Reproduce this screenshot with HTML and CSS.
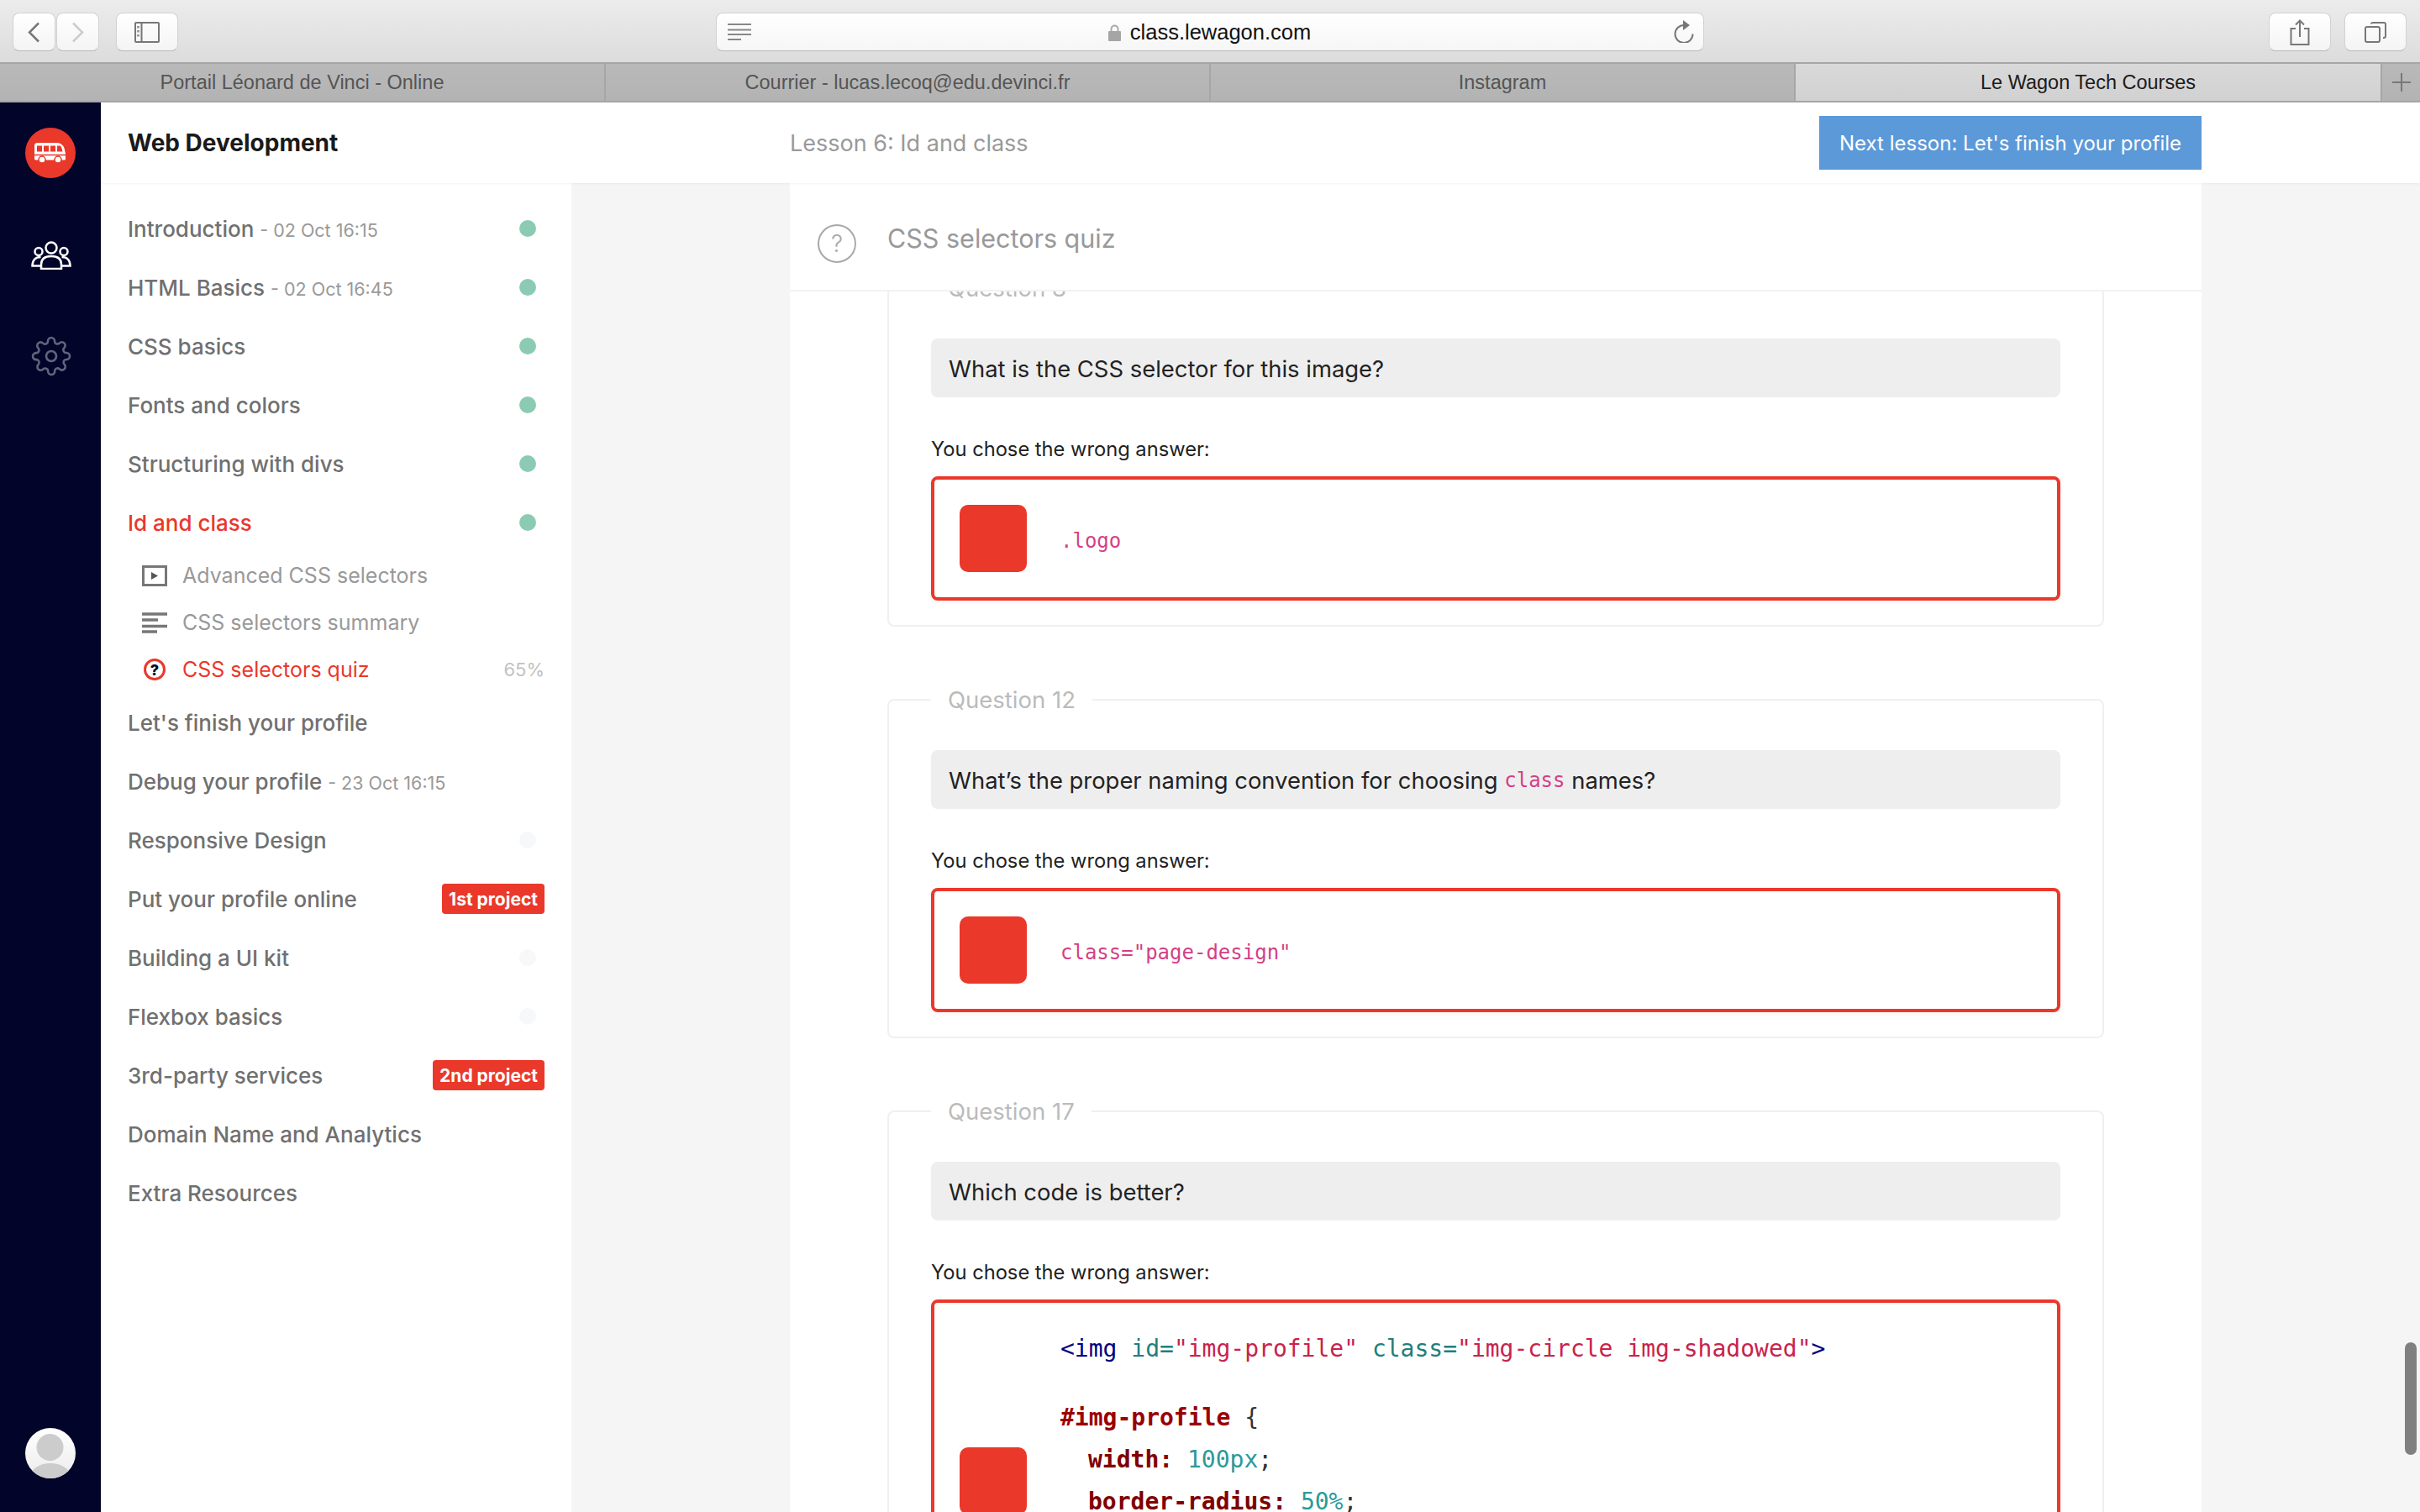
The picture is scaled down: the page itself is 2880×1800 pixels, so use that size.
FILE: index.html
```html
<!DOCTYPE html>
<html lang="en">
<head>
    <meta charset="UTF-8">
    <title>Le Wagon Tech Courses</title>
    <link rel="stylesheet" href="styles.css">
</head>
<body>

    <!-- Browser toolbar -->
    <div class="toolbar">
        <div class="tool-group">
            <div class="nav-buttons">
                <div class="tool-button nav-button">
                    <svg width="17" height="25" viewBox="0 0 17 25"><path d="M14 1.500 3 12.500l11 11" fill="none" stroke="#777" stroke-width="2.500"/></svg>
                </div>
                <div class="tool-button nav-button">
                    <svg width="17" height="25" viewBox="0 0 17 25"><path d="M3 1.500l11 11-11 11" fill="none" stroke="#ccc" stroke-width="2.500"/></svg>
                </div>
            </div>
            <div class="tool-button wide-button">
                <svg width="30" height="25" viewBox="0 0 30 25"><rect x="1" y="1" width="28" height="23" rx="1" fill="none" stroke="#777" stroke-width="2"/><path d="M8.500 1v23" stroke="#777" stroke-width="2"/><path d="M3 5h3v2.500H3zM3 10h3v2.500H3zM3 15h3v2.500H3z" fill="#999"/></svg>
            </div>
        </div>
        <div class="url-bar">
            <svg class="reader-icon" width="28" height="20" viewBox="0 0 28 20"><path d="M0 1h28M0 7.500h28M0 13h28M0 19h16" stroke="#888" stroke-width="2"/></svg>
            <div class="url-text">
                <svg width="15" height="20" viewBox="0 0 15 20"><path d="M3.500 9V5.500a4 4 0 0 1 8 0V9" fill="none" stroke="#aaa" stroke-width="2"/><rect y="8" width="15" height="12" rx="1" fill="#a5a5a5"/></svg>
                <span>class.lewagon.com</span>
            </div>
            <svg class="reload-icon" width="24" height="27" viewBox="0 0 24 27"><path d="M12 6A10.500 10.500 0 1 0 22.500 16.500" fill="none" stroke="#777" stroke-width="2"/><path d="M11 0l8 6-8 6z" fill="#777"/></svg>
        </div>
        <div class="tool-group tool-group-right">
            <div class="tool-button wide-button">
                <svg width="24" height="31" viewBox="0 0 24 31"><path d="M7 11H1.500v19h21V11H17M12 21V2M7 6.500 12 1.500l5 5" fill="none" stroke="#777" stroke-width="2"/></svg>
            </div>
            <div class="tool-button wide-button">
                <svg width="26" height="25" viewBox="0 0 26 25"><rect x="1" y="6" width="17" height="18" rx="2" fill="none" stroke="#777" stroke-width="2"/><path d="M8 2.500Q8 1 10 1h13q2 0 2 2v14q0 2-2 2h-1" fill="none" stroke="#777" stroke-width="2"/></svg>
            </div>
        </div>
    </div>

    <!-- Browser tabs -->
    <div class="tabs">
        <div class="tab tab-1">Portail Léonard de Vinci - Online</div>
        <div class="tab tab-2">Courrier - lucas.lecoq@edu.devinci.fr</div>
        <div class="tab tab-3">Instagram</div>
        <div class="tab tab-active">Le Wagon Tech Courses</div>
        <div class="tab tab-plus">
            <svg width="22" height="22" viewBox="0 0 22 22"><path d="M11 0v22M0 11h22" stroke="#777" stroke-width="2"/></svg>
        </div>
    </div>

    <div class="app">

        <!-- Dark icon rail -->
        <div class="rail">
            <div class="logo">
                <svg width="38" height="25" viewBox="0 0 38 25">
                    <path d="M4 0h23q6 0 8.500 6.500L37 13v6q0 1.500-1.500 1.500H1.500Q0 20.500 0 19V3q0-3 4-3z" fill="#fff"/>
                    <path d="M3 3.500h6v7H3zM11 3.500h6v7h-6zM19 3.500h6v7h-6zM27 3.500h3.500q1.500 0 3 7H27z" fill="#ea382b"/>
                    <path d="M0 14.500h37" stroke="#ea382b" stroke-width="1.500"/>
                    <circle cx="9" cy="20" r="4" fill="#fff" stroke="#ea382b" stroke-width="1.500"/>
                    <circle cx="28" cy="20" r="4" fill="#fff" stroke="#ea382b" stroke-width="1.500"/>
                </svg>
            </div>
            <svg class="rail-people" width="48" height="34" viewBox="0 0 48 34" fill="none" stroke="#fff" stroke-width="2.500">
                <circle cx="24" cy="8" r="6.500"/>
                <circle cx="9" cy="12.500" r="4.500"/>
                <circle cx="39" cy="12.500" r="4.500"/>
                <path d="M12 33v-5c0-7 5-10 12-10s12 3 12 10v5z"/>
                <path d="M11.500 19C5 19 1.500 23 1.500 29.500H12M36.500 19c6.500 0 10 4 10 10.500H36"/>
            </svg>
            <svg class="rail-gear" width="48" height="48" viewBox="0 0 24 24" fill="none" stroke="#63647c" stroke-width="1.300">
                <circle cx="12" cy="12" r="3"/>
                <path d="M19.400 15a1.650 1.650 0 0 0 .33 1.820l.06.06a2 2 0 0 1 0 2.830 2 2 0 0 1-2.830 0l-.06-.06a1.650 1.650 0 0 0-1.820-.33 1.650 1.650 0 0 0-1 1.510V21a2 2 0 0 1-2 2 2 2 0 0 1-2-2v-.09A1.650 1.650 0 0 0 9 19.400a1.650 1.650 0 0 0-1.820.33l-.06.06a2 2 0 0 1-2.830 0 2 2 0 0 1 0-2.830l.06-.06a1.650 1.650 0 0 0 .33-1.820 1.650 1.650 0 0 0-1.510-1H3a2 2 0 0 1-2-2 2 2 0 0 1 2-2h.09A1.650 1.650 0 0 0 4.600 9a1.650 1.650 0 0 0-.33-1.820l-.06-.06a2 2 0 0 1 0-2.830 2 2 0 0 1 2.830 0l.06.06a1.650 1.650 0 0 0 1.820.33H9a1.650 1.650 0 0 0 1-1.510V3a2 2 0 0 1 2-2 2 2 0 0 1 2 2v.09a1.650 1.650 0 0 0 1 1.510 1.650 1.650 0 0 0 1.820-.33l.06-.06a2 2 0 0 1 2.830 0 2 2 0 0 1 0 2.830l-.06.06a1.650 1.650 0 0 0-.33 1.820V9a1.650 1.650 0 0 0 1.510 1H21a2 2 0 0 1 2 2 2 2 0 0 1-2 2h-.09a1.650 1.650 0 0 0-1.510 1z"/>
            </svg>
            <div class="avatar">
                <svg width="60" height="60" viewBox="0 0 60 60"><circle cx="29.500" cy="23" r="16" fill="#ccc"/><ellipse cx="30" cy="60" rx="25" ry="18" fill="#ccc"/></svg>
            </div>
        </div>

        <div class="main">

            <!-- Page header -->
            <div class="topbar">
                <div class="course-title">Web Development</div>
                <div class="lesson-title">Lesson 6: Id and class</div>
                <div class="next-button">Next lesson: Let's finish your profile</div>
            </div>

            <div class="page">

                <!-- Lesson list -->
                <div class="sidebar">
                    <div class="lesson-row"><span class="lesson-name">Introduction <small>- 02 Oct 16:15</small></span><span class="dot dot-done"></span></div>
                    <div class="lesson-row"><span class="lesson-name">HTML Basics <small>- 02 Oct 16:45</small></span><span class="dot dot-done"></span></div>
                    <div class="lesson-row"><span class="lesson-name">CSS basics</span><span class="dot dot-done"></span></div>
                    <div class="lesson-row"><span class="lesson-name">Fonts and colors</span><span class="dot dot-done"></span></div>
                    <div class="lesson-row"><span class="lesson-name">Structuring with divs</span><span class="dot dot-done"></span></div>
                    <div class="lesson-row lesson-current"><span class="lesson-name">Id and class</span><span class="dot dot-done"></span></div>

                    <div class="sub-row">
                        <svg class="sub-icon" width="30" height="25" viewBox="0 0 30 25"><rect x="1.500" y="1.500" width="27" height="22" fill="none" stroke="#777" stroke-width="3"/><path d="M11 8l8 4.500-8 4.500z" fill="#555"/></svg>
                        <span>Advanced CSS selectors</span>
                    </div>
                    <div class="sub-row">
                        <svg class="sub-icon" width="30" height="25" viewBox="0 0 30 25"><path d="M0 2h30M0 9h19M0 16.500h30M0 23h18" stroke="#777" stroke-width="3.500"/></svg>
                        <span>CSS selectors summary</span>
                    </div>
                    <div class="sub-row sub-current">
                        <span class="sub-icon quiz-mark">?</span>
                        <span>CSS selectors quiz</span>
                        <span class="percent">65%</span>
                    </div>

                    <div class="lesson-row"><span class="lesson-name">Let's finish your profile</span></div>
                    <div class="lesson-row"><span class="lesson-name">Debug your profile <small>- 23 Oct 16:15</small></span></div>
                    <div class="lesson-row"><span class="lesson-name">Responsive Design</span><span class="dot"></span></div>
                    <div class="lesson-row"><span class="lesson-name">Put your profile online</span><span class="badge">1st project</span></div>
                    <div class="lesson-row"><span class="lesson-name">Building a UI kit</span><span class="dot"></span></div>
                    <div class="lesson-row"><span class="lesson-name">Flexbox basics</span><span class="dot"></span></div>
                    <div class="lesson-row"><span class="lesson-name">3rd-party services</span><span class="badge">2nd project</span></div>
                    <div class="lesson-row"><span class="lesson-name">Domain Name and Analytics</span></div>
                    <div class="lesson-row"><span class="lesson-name">Extra Resources</span></div>
                </div>

                <!-- Quiz column -->
                <div class="content">
                    <div class="quiz-head">
                        <span class="quiz-icon">?</span>
                        <span class="quiz-title">CSS selectors quiz</span>
                    </div>
                    <div class="quiz-scroll">

                        <fieldset class="question question-first">
                            <legend>Question 8</legend>
                            <div class="prompt">What is the CSS selector for this image?</div>
                            <div class="answer-label">You chose the wrong answer:</div>
                            <div class="answer">
                                <div class="answer-mark"></div>
                                <code class="inline-code">.logo</code>
                            </div>
                        </fieldset>

                        <fieldset class="question">
                            <legend>Question 12</legend>
                            <div class="prompt">What’s the proper naming convention for choosing <code class="inline-code">class</code> names?</div>
                            <div class="answer-label">You chose the wrong answer:</div>
                            <div class="answer">
                                <div class="answer-mark"></div>
                                <code class="inline-code">class="page-design"</code>
                            </div>
                        </fieldset>

                        <fieldset class="question">
                            <legend>Question 17</legend>
                            <div class="prompt">Which code is better?</div>
                            <div class="answer-label">You chose the wrong answer:</div>
                            <div class="answer answer-tall">
                                <div class="answer-mark"></div>
                                <div class="code-blocks">
                                    <div class="code">
                                        <div class="code-line"><span class="tag">&lt;img</span> <span class="attr">id=</span><span class="str">"img-profile"</span> <span class="attr">class=</span><span class="str">"img-circle img-shadowed"</span><span class="tag">&gt;</span></div>
                                    </div>
                                    <div class="code">
                                        <div class="code-line"><span class="sel">#img-profile</span> {</div>
                                        <div class="code-line indent"><span class="prop">width:</span> <span class="val">100px</span>;</div>
                                        <div class="code-line indent"><span class="prop">border-radius:</span> <span class="val">50%</span>;</div>
                                        <div class="code-line">}</div>
                                    </div>
                                </div>
                            </div>
                        </fieldset>

                    </div>
                </div>
            </div>
        </div>
    </div>

    <div class="scrollbar"></div>
</body>
</html>
```

FILE: styles.css
```css
html, body {
    height: 100%;
}
body {
    margin: 0;
    display: flex;
    flex-direction: column;
    overflow: hidden;
    font-family: Inter, "Liberation Sans", sans-serif;
    color: #222;
    background-color: #f5f5f5;
}

/* Browser chrome */
.toolbar {
    flex: none;
    box-sizing: border-box;
    height: 74px;
    padding: 15px 16px 13px 15px;
    display: grid;
    grid-template-columns: 1fr 1176px 1fr;
    column-gap: 0;
    background: linear-gradient(#ececec, #dcdcdc);
    font-family: "Liberation Sans", Arial, sans-serif;
}
.tool-group {
    display: flex;
    gap: 20px;
}
.tool-group-right {
    justify-content: flex-end;
    gap: 16px;
}
.nav-buttons {
    display: flex;
    gap: 1px;
}
.tool-button {
    box-sizing: border-box;
    height: 46px;
    display: flex;
    align-items: center;
    justify-content: center;
    background: linear-gradient(#fff, #f4f4f4);
    border: 1px solid #d2d2d2;
    border-bottom-color: #b8b8b8;
    border-radius: 8px;
}
.nav-button {
    width: 51px;
}
.wide-button {
    width: 74px;
}
.url-bar {
    position: relative;
    box-sizing: border-box;
    height: 46px;
    display: flex;
    align-items: center;
    justify-content: center;
    background: linear-gradient(#fff, #f6f6f6);
    border: 1px solid #d2d2d2;
    border-bottom-color: #b8b8b8;
    border-radius: 8px;
}
.url-text {
    display: flex;
    align-items: center;
    gap: 11px;
    padding-top: 1px;
    font-size: 25.5px;
    color: #111;
}
.reader-icon {
    position: absolute;
    left: 13px;
    top: 12px;
}
.reload-icon {
    position: absolute;
    right: 11px;
    top: 8px;
}
.tabs {
    flex: none;
    box-sizing: border-box;
    height: 48px;
    display: flex;
    background: linear-gradient(#b9b9b9, #b3b3b3);
    border-top: 2px solid #a6a6a6;
    border-bottom: 2px solid #a6a6a6;
    font-family: "Liberation Sans", Arial, sans-serif;
    font-size: 23.5px;
    color: #555;
}
.tab {
    box-sizing: border-box;
    display: flex;
    align-items: center;
    justify-content: center;
    border-left: 2px solid #a6a6a6;
}
.tab-1 {
    width: 719px;
    border-left: none;
}
.tab-2 {
    width: 720px;
}
.tab-3 {
    width: 696px;
}
.tab-active {
    width: 698px;
    background: linear-gradient(#d9d9d9, #d1d1d1);
    color: #1c1c1c;
}
.tab-plus {
    flex: 1;
}

/* App layout */
.app {
    flex: 1;
    min-height: 0;
    display: flex;
}
.rail {
    flex: none;
    width: 120px;
    display: flex;
    flex-direction: column;
    align-items: center;
    padding-top: 30px;
    box-sizing: border-box;
    background-color: #03042a;
}
.logo {
    width: 60px;
    height: 60px;
    display: flex;
    align-items: center;
    justify-content: center;
    border-radius: 50%;
    background-color: #ea382b;
}
.rail-people {
    margin-top: 75px;
    margin-left: 2px;
}
.rail-gear {
    margin-top: 79px;
    margin-left: 2px;
}
.avatar {
    margin-top: auto;
    margin-bottom: 40px;
    width: 60px;
    height: 60px;
    border-radius: 50%;
    overflow: hidden;
    background: linear-gradient(#fff, #ececec);
}
.avatar svg {
    display: block;
}
.main {
    flex: 1;
    min-width: 0;
    display: flex;
    flex-direction: column;
}
.topbar {
    position: relative;
    z-index: 2;
    flex: none;
    box-sizing: border-box;
    height: 96px;
    padding-right: 260px;
    display: flex;
    align-items: center;
    background-color: #fff;
    box-shadow: 0 1px 3px rgba(0, 0, 0, 0.05);
}
.course-title {
    box-sizing: border-box;
    width: 820px;
    padding-left: 32px;
    font-size: 28px;
    font-weight: 700;
    color: #1a1a1a;
}
.lesson-title {
    flex: 1;
    font-size: 27px;
    color: #999;
}
.next-button {
    width: 455px;
    height: 64px;
    display: flex;
    align-items: center;
    justify-content: center;
    background-color: #5b99d9;
    color: #fff;
    font-size: 24px;
}
.page {
    flex: 1;
    min-height: 0;
    display: flex;
}

/* Lesson list */
.sidebar {
    flex: none;
    box-sizing: border-box;
    width: 560px;
    padding: 19px 32px 0 32px;
    background-color: #fff;
}
.lesson-row {
    height: 70px;
    display: flex;
    align-items: center;
    justify-content: space-between;
    font-size: 26px;
    font-weight: 500;
    color: #707070;
}
.lesson-name small {
    font-size: 21.5px;
    font-weight: 400;
    color: #999;
}
.lesson-current {
    color: #ea382b;
}
.dot {
    width: 20px;
    height: 20px;
    margin-right: 10px;
    border-radius: 50%;
    background-color: #f7f8f9;
}
.dot-done {
    background-color: #8ccbb3;
}
.badge {
    height: 36px;
    padding: 0 8px;
    display: flex;
    align-items: center;
    border-radius: 4px;
    background-color: #ea382b;
    color: #fff;
    font-size: 21px;
    font-weight: 700;
}
.sub-row {
    height: 56px;
    padding-left: 17px;
    display: flex;
    align-items: center;
    font-size: 25px;
    color: #999;
}
.sub-icon {
    flex: none;
    width: 30px;
    margin-right: 18px;
}
.sub-current {
    color: #ea382b;
}
.quiz-mark {
    box-sizing: border-box;
    width: 26px;
    height: 26px;
    margin-left: 2px;
    margin-right: 20px;
    display: flex;
    align-items: center;
    justify-content: center;
    border: 3px solid #ea382b;
    border-radius: 50%;
    color: #03042a;
    font-size: 18px;
    font-weight: 800;
}
.percent {
    margin-left: auto;
    font-size: 22px;
    color: #c2c2c2;
}

/* Quiz column */
.content {
    flex: none;
    width: 1680px;
    margin-left: 260px;
    display: flex;
    flex-direction: column;
    background-color: #fff;
}
.quiz-head {
    position: relative;
    z-index: 1;
    flex: none;
    box-sizing: border-box;
    height: 129px;
    padding-left: 33px;
    display: flex;
    align-items: center;
    border-bottom: 2px solid #f2f2f2;
    background-color: #fff;
}
.quiz-icon {
    box-sizing: border-box;
    width: 46px;
    height: 46px;
    margin-top: 16px;
    margin-right: 37px;
    display: flex;
    align-items: center;
    justify-content: center;
    border: 2px solid #a8a8a8;
    border-radius: 50%;
    color: #a8a8a8;
    font-size: 28px;
    font-weight: 300;
}
.quiz-title {
    padding-top: 4px;
    font-size: 30.5px;
    color: #999;
}
.quiz-scroll {
    flex: 1;
    min-height: 0;
    overflow: hidden;
    padding: 0 116px;
}
.question {
    min-width: 0;
    margin: 0 0 71px;
    padding: 0 50px 29px;
    border: 2px solid #f0f0f0;
    border-radius: 8px;
}
.question-first {
    margin-top: -20px;
}
.question legend {
    padding: 0 20px;
    font-size: 27.5px;
    line-height: 32px;
    color: #bbb;
}
.prompt {
    box-sizing: border-box;
    height: 70px;
    margin-top: 44px;
    padding-left: 21px;
    padding-top: 2px;
    display: flex;
    align-items: center;
    white-space: pre-wrap;
    border-radius: 8px;
    background-color: #eee;
    font-size: 27.4px;
    color: #222;
}
.answer-label {
    margin-top: 45px;
    margin-bottom: 15px;
    font-size: 23.7px;
    line-height: 34px;
    color: #222;
}
.answer {
    box-sizing: border-box;
    min-height: 148px;
    padding: 30px;
    display: flex;
    align-items: center;
    gap: 40px;
    border: 4px solid #ea382b;
    border-radius: 8px;
    box-shadow: 0 2px 6px rgba(0, 0, 0, 0.05);
}
.answer-tall {
    min-height: 432px;
    align-items: flex-start;
}
.answer-tall .answer-mark {
    margin-top: 142px;
}
.answer-mark {
    flex: none;
    width: 80px;
    height: 80px;
    border-radius: 10px;
    background-color: #ea382b;
}
.inline-code {
    font-family: "DejaVu Sans Mono", "Liberation Mono", monospace;
    font-size: 24px;
    color: #d43f85;
}
.answer .inline-code {
    margin-top: 6px;
}
.code-blocks {
    display: flex;
    flex-direction: column;
    gap: 32px;
}
.code {
    font-family: "DejaVu Sans Mono", "Liberation Mono", monospace;
    font-size: 28px;
    color: #333;
}
.code-line {
    height: 50px;
    line-height: 50px;
    white-space: pre;
}
.indent {
    padding-left: 33px;
}
.tag {
    color: #000080;
}
.attr {
    color: #1f7f7f;
}
.str {
    color: #c8234c;
}
.sel {
    color: #990000;
    font-weight: 700;
}
.prop {
    color: #800000;
    font-weight: 700;
}
.val {
    color: #2a9a9a;
}

/* Overlay scrollbar thumb */
.scrollbar {
    position: absolute;
    left: 2862px;
    top: 1598px;
    width: 14px;
    height: 134px;
    border-radius: 7px;
    background-color: #808080;
}
```
